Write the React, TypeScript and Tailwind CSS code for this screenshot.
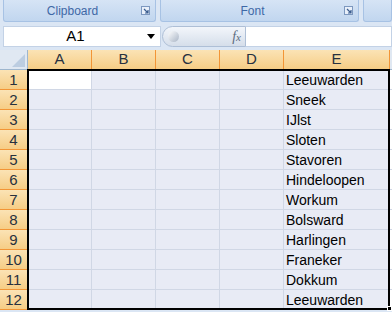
import { Fragment } from "react";

const towns = [
  "Leeuwarden",
  "Sneek",
  "IJlst",
  "Sloten",
  "Stavoren",
  "Hindeloopen",
  "Workum",
  "Bolsward",
  "Harlingen",
  "Franeker",
  "Dokkum",
  "Leeuwarden",
];

const cols = ["A", "B", "C", "D", "E"];

function Launcher() {
  return (
    <svg width="9" height="9" viewBox="0 0 9 9" className="shrink-0">
      <rect x="0.5" y="0.5" width="8" height="8" fill="#e9f0fa" stroke="#7d98bf" />
      <path d="M3 3 L7 7 M7 4 V7 H4" stroke="#3b5d8f" fill="none" strokeWidth="1.2" />
    </svg>
  );
}

function Group({ label, className }: { label: string; className: string }) {
  return (
    <div className={`flex h-[22px] items-center rounded-b-[3px] border border-t-0 border-[#a7c2e4] bg-gradient-to-b from-[#d6e4f5] to-[#c1d6ef] ${className}`}>
      <span className="flex-1 pt-[1px] text-center text-[12px] text-[#3e68a6]">{label}</span>
      {label ? <div className="mr-[5px]"><Launcher /></div> : null}
    </div>
  );
}

export default function App() {
  return (
    <div className="h-[312px] w-[392px] overflow-hidden bg-[#dbe6f4] font-['Liberation_Sans',sans-serif]">
      {/* ribbon group labels */}
      <div className="flex gap-[4px] pl-[3px]">
        <Group label="Clipboard" className="w-[153px]" />
        <Group label="Font" className="w-[199px]" />
        <Group label="" className="flex-1" />
      </div>

      {/* name box + formula bar */}
      <div className="flex h-[28px] items-center pl-[3px] pt-[1px]">
        <div className="flex h-[21px] w-[158px] items-center border border-[#c3d2e6] bg-white">
          <span className="flex-1 text-center text-[15px] text-black">A1</span>
          <svg width="8" height="5" viewBox="0 0 8 5" className="mr-[5px]">
            <path d="M0 0 H8 L4 5 Z" fill="#000" />
          </svg>
        </div>
        <div className="ml-[1px] flex h-[21px] w-[84px] items-center rounded-l-full border border-[#aebfd6] bg-gradient-to-b from-[#f3f6fb] to-[#d5deea]">
          <div className="ml-[5px] h-[11px] w-[11px] rounded-full bg-gradient-to-br from-[#ffffff] to-[#a9b5c6]" />
          <span className="ml-auto mr-[4px] font-['Liberation_Serif',serif] text-[14px] italic text-[#5b6b80]">
            f<span className="text-[11px]">x</span>
          </span>
        </div>
        <div className="h-[21px] flex-1 border border-l-0 border-[#c3d2e6] bg-white" />
      </div>

      {/* sheet */}
      <div className="relative grid grid-cols-[28px_64px_64px_64px_64px_106px_4px] grid-rows-[20px_repeat(12,20px)] bg-white">
        <div className="flex items-end justify-end border-r border-b border-[#9eb6ce] bg-[#e0e8f2] p-[2px]">
          <svg width="13" height="13" viewBox="0 0 13 13">
            <path d="M13 0 V13 H0 Z" fill="#bccde1" />
          </svg>
        </div>
        {cols.map((c) => (
          <div
            key={c}
            className="flex items-center justify-center border-r border-b border-[#f29536] bg-gradient-to-b from-[#fbe3b5] to-[#f6cd85] text-[15px] text-[#27313f]"
          >
            {c}
          </div>
        ))}
        <div className="border-b border-[#9eb6ce] bg-[#e0e8f2]" />

        {towns.map((t, i) => (
          <Fragment key={i}>
            <div className="flex items-center justify-center border-r border-b border-[#f29536] bg-gradient-to-b from-[#fbe3b5] to-[#f6cd85] pt-[1px] text-[15px] text-[#27313f]">
              {i + 1}
            </div>
            {cols.map((c, j) => (
              <div
                key={c}
                className={`flex items-center border-r border-b border-[#d0d7e5] pl-[2px] pt-[2px] text-[14px] text-black ${
                  i === 0 && j === 0 ? "bg-white" : "bg-[#e8ebf5]"
                }`}
              >
                {j === 4 ? t : ""}
              </div>
            ))}
            <div className="border-b border-[#d0d7e5] bg-white" />
          </Fragment>
        ))}

        {/* selection outline A1:E12 */}
        <div className="pointer-events-none absolute left-[27px] top-[19px] h-[241px] w-[363px] border-2 border-black" />
        <div className="pointer-events-none absolute left-[387px] top-[256px] h-[5px] w-[5px] border border-white bg-black" />
      </div>
    </div>
  );
}
